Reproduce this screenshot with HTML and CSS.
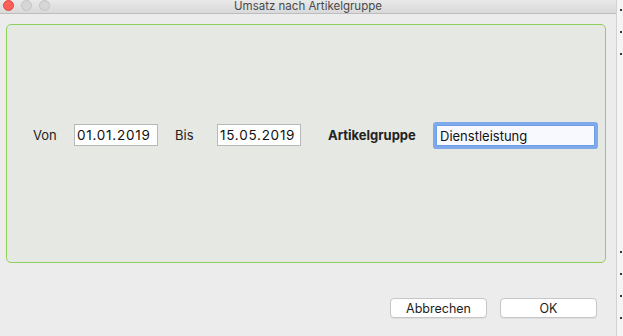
FILE: index.html
```html
<!DOCTYPE html>
<html lang="de">
<head>
  <meta charset="UTF-8">
  <title>Umsatz nach Artikelgruppe</title>
  <link rel="stylesheet" href="styles.css">
</head>
<body>
  <div class="screen">
    <div class="window">
      <div class="window__titlebar">
        <div class="traffic">
          <span class="traffic__light traffic__light--close"></span>
          <span class="traffic__light"></span>
          <span class="traffic__light"></span>
        </div>
        <div class="window__title">Umsatz nach Artikelgruppe</div>
      </div>
      <div class="window__body">
        <div class="filter-panel">
          <div class="filter-row">
            <span class="filter-label filter-label--von">Von</span>
            <input class="filter-input filter-input--date" type="text" value="01.01.2019">
            <span class="filter-label filter-label--bis">Bis</span>
            <input class="filter-input filter-input--date" type="text" value="15.05.2019">
            <span class="filter-label filter-label--bold">Artikelgruppe</span>
            <input class="filter-input filter-input--focus" type="text" value="Dienstleistung">
          </div>
        </div>
        <div class="button-row">
          <button class="dialog-button">Abbrechen</button>
          <button class="dialog-button">OK</button>
        </div>
      </div>
    </div>
    <div class="edge">
      <span class="edge__dot"></span>
      <span class="edge__dot"></span>
      <span class="edge__dot"></span>
      <span class="edge__gap"></span>
      <span class="edge__dot"></span>
      <span class="edge__dot"></span>
      <span class="edge__dot"></span>
      <span class="edge__dot"></span>
    </div>
  </div>
</body>
</html>
```

FILE: styles.css
```css
/* Page */
html, body {
  margin: 0;
  padding: 0;
}

body {
  font-family: Inter, "Liberation Sans", sans-serif;
  color: #1e1e1e;
  background: #f4f4f4;
}

.screen {
  display: flex;
  width: 623px;
  height: 336px;
  overflow: hidden;
}

/* Window */
.window {
  width: 616px;
  height: 336px;
  background: #ececec;
  border-right: 1px solid #d2d2d2;
  display: flex;
  flex-direction: column;
}

.window__titlebar {
  height: 13px;
  border-bottom: 1px solid #bdbdbd;
  background: linear-gradient(#e9e9e9, #d9d9d9);
  display: flex;
  align-items: center;
  position: relative;
}

.traffic {
  display: flex;
  gap: 7px;
  padding-left: 3px;
  margin-top: -2px;
}

.traffic__light {
  width: 11px;
  height: 11px;
  border-radius: 50%;
  box-sizing: border-box;
  background: #d6d6d6;
  border: 1px solid #c4c4c4;
}

.traffic__light--close {
  background: #fc5f57;
  border-color: #e2463f;
}

.window__title {
  position: absolute;
  left: 0;
  right: 0;
  top: 0;
  text-align: center;
  font-size: 11.5px;
  color: #4a4a4a;
  line-height: 13px;
}

.window__body {
  padding: 10px 10px 0 6px;
  flex: 1;
  display: flex;
  flex-direction: column;
}

/* Panel */
.filter-panel {
  width: 600px;
  height: 239px;
  box-sizing: border-box;
  border: 1px solid #8fd05c;
  border-radius: 5px;
  background: #e6e8e3;
  padding: 97px 0 0 26px;
}

.filter-row {
  display: flex;
  align-items: center;
  height: 26px;
}

.filter-label {
  font-size: 13px;
  color: #222;
}

.filter-label--von {
  width: 41px;
}

.filter-label--bis {
  width: 42px;
  padding-left: 17px;
}

.filter-label--bold {
  font-weight: 700;
  padding-left: 27px;
  width: 108px;
}

.filter-input {
  font-family: Inter, "Liberation Sans", sans-serif;
  font-size: 13.5px;
  color: #111;
  width: 84px;
  height: 22px;
  box-sizing: border-box;
  border: 1px solid #b8b8b8;
  background: #fff;
  padding: 0 2px;
  outline: 0;
  margin: 0;
}

.filter-input--date {
  letter-spacing: 0.75px;
}

.filter-input--focus {
  font-size: 13px;
  width: 159px;
  height: 21px;
  margin-top: 1px;
  border: 1px solid #6e9ee6;
  border-radius: 1px;
  background: #f8f9ff;
  box-shadow: 0 0 0 3px #7ea9ea;
  padding-left: 3px;
}

/* Buttons */
.button-row {
  display: flex;
  justify-content: flex-end;
  gap: 13px;
  padding: 35px 9px 0 0;
}

.dialog-button {
  font-family: Inter, "Liberation Sans", sans-serif;
  font-size: 12.5px;
  color: #1e1e1e;
  width: 97px;
  height: 20px;
  background: #fff;
  border: 1px solid #c6c6c6;
  border-radius: 4px;
  box-shadow: 0 1px 0 rgba(0,0,0,.06);
  padding: 0;
}

/* Right edge of the screen */
.edge {
  width: 6px;
  display: flex;
  flex-direction: column;
  align-items: flex-end;
  padding-top: 9px;
  gap: 20px;
}

.edge__dot {
  width: 2px;
  height: 2px;
  background: #333;
  margin-right: 1px;
}

.edge__gap {
  height: 156px;
}
```
